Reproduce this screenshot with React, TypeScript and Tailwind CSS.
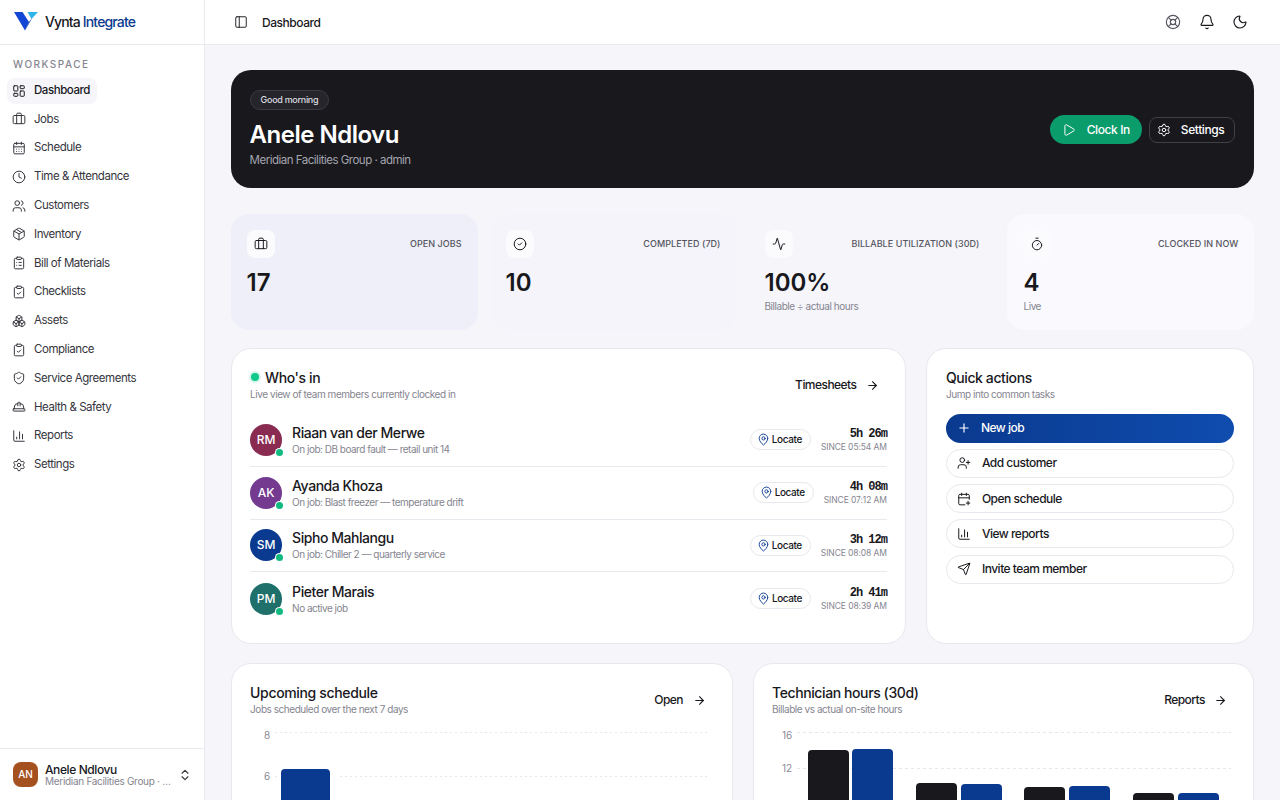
import {
  Activity, ArrowRight, Bell, Boxes, Briefcase, CalendarDays, CalendarPlus, ChartColumn, ChevronsUpDown,
  CircleCheck, ClipboardCheck, ClipboardList, Clock, HardHat, LayoutDashboard, LifeBuoy, MapPin, Moon,
  Package, PanelLeft, Play, Plus, Send, Settings, ShieldCheck, Timer, UserPlus, Users,
} from "lucide-react"

const nav = [
  { label: "Dashboard", icon: LayoutDashboard, active: true },
  { label: "Jobs", icon: Briefcase },
  { label: "Schedule", icon: CalendarDays },
  { label: "Time & Attendance", icon: Clock },
  { label: "Customers", icon: Users },
  { label: "Inventory", icon: Package },
  { label: "Bill of Materials", icon: ClipboardList },
  { label: "Checklists", icon: ClipboardCheck },
  { label: "Assets", icon: Boxes },
  { label: "Compliance", icon: ClipboardCheck },
  { label: "Service Agreements", icon: ShieldCheck },
  { label: "Health & Safety", icon: HardHat },
  { label: "Reports", icon: ChartColumn },
  { label: "Settings", icon: Settings },
]

const stats = [
  { label: "OPEN JOBS", value: "17", sub: "", icon: Briefcase, bg: "bg-[#eeeff8]" },
  { label: "COMPLETED (7D)", value: "10", sub: "", icon: CircleCheck, bg: "bg-[#f4f4fa]" },
  { label: "BILLABLE UTILIZATION (30D)", value: "100%", sub: "Billable ÷ actual hours", icon: Activity, bg: "bg-[#f5f5fa]" },
  { label: "CLOCKED IN NOW", value: "4", sub: "Live", icon: Timer, bg: "bg-[#f9f9fe]" },
]

const people = [
  { initials: "RM", name: "Riaan van der Merwe", job: "On job: DB board fault — retail unit 14", time: "5h 26m", since: "SINCE 05:54 AM", color: "bg-[#8a2c52]" },
  { initials: "AK", name: "Ayanda Khoza", job: "On job: Blast freezer — temperature drift", time: "4h 08m", since: "SINCE 07:12 AM", color: "bg-[#743a8f]" },
  { initials: "SM", name: "Sipho Mahlangu", job: "On job: Chiller 2 — quarterly service", time: "3h 12m", since: "SINCE 08:08 AM", color: "bg-[#0a3a8f]" },
  { initials: "PM", name: "Pieter Marais", job: "No active job", time: "2h 41m", since: "SINCE 08:39 AM", color: "bg-[#1f6f6a]" },
]

const actions = [
  { label: "Add customer", icon: UserPlus },
  { label: "Open schedule", icon: CalendarPlus },
  { label: "View reports", icon: ChartColumn },
  { label: "Invite team member", icon: Send },
]

function CardLink({ label }: { label: string }) {
  return (
    <button className="flex items-center gap-[9.5px] pr-[7px] h-[32px] text-[12px] font-medium tracking-[-0.55px] text-[#18181d] shrink-0">
      {label}
      <ArrowRight className="w-[13px] h-[13px]" />
    </button>
  )
}

function Logo() {
  return (
    <svg width="26" height="20" viewBox="0 0 26 20" className="shrink-0">
      <path d="M1 1 L9.5 1 L16 11 L12 19.5 Z" fill="#1247d6" />
      <path d="M16 11 L19.5 6.5 L12 19.5 Z" fill="#0a3a8f" />
      <path d="M14.5 1 L25 1 L18.5 8 Z" fill="#2fb4ea" />
    </svg>
  )
}

function ScheduleChart() {
  return (
    <svg width="462" height="90" viewBox="0 0 462 90" className="block mt-[15px] overflow-visible">
      <text x="14" y="8" fontSize="10" fill="#8a8a94" fontFamily="Inter">8</text>
      <text x="14" y="49" fontSize="10" fill="#8a8a94" fontFamily="Inter">6</text>
      <line x1="25" x2="459" y1="1.5" y2="1.5" stroke="#e6e6ec" strokeDasharray="2 3" />
      <line x1="25" x2="459" y1="45.5" y2="45.5" stroke="#e6e6ec" strokeDasharray="2 3" />
      <rect x="29" y="36" width="58" height="70" fill="#ffffff" />
      <rect x="31" y="38" width="49" height="70" rx="4" fill="#0a3a8f" />
    </svg>
  )
}

function HoursChart() {
  const bars = [
    [36, 19, 80, 18],
    [144, 52, 189, 53],
    [252, 56, 297, 55],
    [361, 62, 406, 62],
  ]
  return (
    <svg width="462" height="90" viewBox="0 0 462 90" className="block mt-[15px] overflow-visible">
      <text x="10" y="8" fontSize="10" fill="#8a8a94" fontFamily="Inter">16</text>
      <text x="10" y="41" fontSize="10" fill="#8a8a94" fontFamily="Inter">12</text>
      <line x1="25" x2="459" y1="1.5" y2="1.5" stroke="#e6e6ec" strokeDasharray="3 3" />
      <line x1="25" x2="459" y1="37.5" y2="37.5" stroke="#e6e6ec" strokeDasharray="3 3" />
      {bars.map(([x1, y1, x2, y2]) => (
        <g key={x1}>
          <rect x={x1} y={y1} width="41" height="120" rx="4" fill="#18181d" />
          <rect x={x2} y={y2} width="41" height="120" rx="4" fill="#0a3a8f" />
        </g>
      ))}
    </svg>
  )
}

export default function App() {
  return (
    <div className="flex h-screen overflow-hidden bg-[#f5f5fa] text-[#18181d] font-['Inter',sans-serif]">
      <aside className="w-[205px] shrink-0 bg-white border-r border-[#e9e9ef] flex flex-col">
        <div className="h-[45px] shrink-0 border-b border-[#e9e9ef] flex items-center gap-[6px] pl-[13px] pb-[2px]">
          <Logo />
          <span className="text-[14px] font-medium tracking-[-0.85px]">
            Vynta <span className="text-[#0a3a8f]">Integrate</span>
          </span>
        </div>
        <div className="flex-1 px-[7px]">
          <p className="text-[10px] font-medium tracking-[1.5px] text-[#85858f] pl-[6px] pt-[13px] pb-[7.5px] leading-[12px]">WORKSPACE</p>
          <nav className="flex flex-col items-start gap-[2.8px]">
            {nav.map(({ label, icon: Icon, active }) => (
              <a key={label} className={`flex items-center gap-[8px] h-[26px] px-[5px] rounded-[8px] text-[11.5px] tracking-[-0.45px] ${active ? "bg-[#f5f5fa] font-medium text-[#18181d] pr-[7.5px]" : "text-[#35353d]"}`}>
                <Icon className="w-[14px] h-[14px]" strokeWidth={1.7} />
                {label}
              </a>
            ))}
          </nav>
        </div>
        <div className="h-[52px] shrink-0 border-t border-[#e9e9ef] flex items-center pl-[13px] pr-[12px] gap-[7px]">
          <div className="w-[25px] h-[25px] rounded-[8px] bg-[#a5501f] text-white text-[10px] font-medium flex items-center justify-center shrink-0">AN</div>
          <div className="flex-1 min-w-0 leading-none">
            <p className="text-[12px] font-medium leading-[13px] tracking-[-0.4px]">Anele Ndlovu</p>
            <p className="text-[10px] text-[#85858f] leading-[11px] truncate tracking-[-0.3px]">Meridian Facilities Group · admin</p>
          </div>
          <ChevronsUpDown className="w-[14px] h-[14px] text-[#35353d] shrink-0" />
        </div>
      </aside>

      <div className="flex-1 min-w-0 flex flex-col">
        <header className="h-[45px] shrink-0 bg-white border-b border-[#e9e9ef] flex items-center pl-[29px] pr-[32px]">
          <PanelLeft className="w-[14px] h-[14px]" strokeWidth={1.6} />
          <span className="ml-[14px] mt-[1px] text-[12px] font-medium tracking-[-0.45px]">Dashboard</span>
          <div className="ml-auto flex items-center gap-[17.5px]">
            <LifeBuoy className="w-[16px] h-[16px] text-[#55555f]" strokeWidth={1.7} />
            <Bell className="w-[16px] h-[16px]" strokeWidth={1.7} />
            <Moon className="w-[16px] h-[16px]" strokeWidth={1.7} />
          </div>
        </header>

        <main className="flex-1 overflow-hidden px-[25.6px] pt-[25px] flex flex-col">
          <section className="h-[118px] shrink-0 rounded-[20px] bg-[#18181d] flex items-center justify-between pl-[19px] pr-[19px]">
            <div>
              <span className="flex w-fit items-center h-[20px] px-[10px] rounded-full border border-[#3a3a41] bg-[#25252b] text-[9px] font-medium tracking-[-0.3px] text-[#dcdce0]">Good morning</span>
              <h1 className="text-[24px] leading-[32px] font-semibold text-white mt-[9px] tracking-[-0.5px]">Anele Ndlovu</h1>
              <p className="text-[11.5px] leading-[16px] tracking-[-0.5px] text-[#a5a5ad] mt-[1px]">Meridian Facilities Group · admin</p>
            </div>
            <div className="flex items-center gap-[7px] pt-[1px]">
              <button className="flex items-center gap-[11px] h-[29px] px-[12px] rounded-full bg-[#0b9c6b] text-white text-[12px] font-medium tracking-[-0.4px]">
                <Play className="w-[14px] h-[14px]" strokeWidth={1.7} />
                Clock In
              </button>
              <button className="flex items-center gap-[10px] h-[26px] pl-[7px] pr-[10px] rounded-[8px] border border-[#3f3f46] text-white text-[12px] font-medium tracking-[-0.4px]">
                <Settings className="w-[14px] h-[14px]" strokeWidth={1.7} />
                Settings
              </button>
            </div>
          </section>

          <section className="grid grid-cols-4 gap-[12px] mt-[26px] shrink-0">
            {stats.map(({ label, value, sub, icon: Icon, bg }) => (
              <div key={label} className={`h-[116px] rounded-[18px] p-[16px] ${bg}`}>
                <div className="flex items-center justify-between">
                  <div className="w-[28px] h-[28px] rounded-[8px] bg-[#fbfbfe] flex items-center justify-center">
                    <Icon className="w-[14px] h-[14px]" strokeWidth={1.7} />
                  </div>
                  <span className="text-[9px] font-medium tracking-[0.05px] text-[#55555f]">{label}</span>
                </div>
                <p className="text-[24px] leading-[32px] font-semibold mt-[9px]">{value}</p>
                {sub && <p className="text-[10px] leading-[14px] tracking-[-0.45px] text-[#85858f]">{sub}</p>}
              </div>
            ))}
          </section>

          <section className="grid grid-cols-[1fr_328px] gap-[20px] mt-[18px] shrink-0">
            <div className="h-[296px] bg-white rounded-[20px] border border-[#e8e8ee] pt-[19px] pl-[18.5px] pr-[18.5px]">
              <div className="flex items-start justify-between">
                <div>
                  <div className="flex items-center gap-[6px] h-[18px]">
                    <span className="w-[8px] h-[8px] rounded-full bg-[#10c98a] ring-[2px] ring-[#d4f6ea] ml-[1px]" />
                    <h2 className="text-[14px] font-medium tracking-[-0.4px]">Who's in</h2>
                  </div>
                  <p className="text-[10px] leading-[14px] tracking-[-0.45px] text-[#85858f] mt-[1px]">Live view of team members currently clocked in</p>
                </div>
                <div className="mt-[1px] mr-[1px]">
                  <CardLink label="Timesheets" />
                </div>
              </div>
              <div className="mt-[13px]">
                {people.map((p, i) => (
                  <div key={p.initials} className={`flex items-center h-[52.8px] ${i < 3 ? "border-b border-[#e8e8ee]" : ""}`}>
                    <div className={`relative w-[32px] h-[32px] rounded-full text-white text-[12px] font-medium flex items-center justify-center shrink-0 ${p.color}`}>
                      {p.initials}
                      <span className="absolute right-[-0.5px] bottom-0 w-[7px] h-[7px] rounded-full bg-[#10b97f] ring-[1px] ring-white" />
                    </div>
                    <div className="ml-[10px] min-w-0 flex-1">
                      <p className="text-[14px] leading-[18px] font-medium tracking-[-0.45px]">{p.name}</p>
                      <p className="text-[10px] leading-[14px] tracking-[-0.5px] text-[#85858f]">{p.job}</p>
                    </div>
                    <button className="flex items-center gap-[2px] h-[21px] pl-[6px] pr-[8px] rounded-full border border-[#e8e8ee] text-[10px] font-medium tracking-[-0.4px] mr-[10px]">
                      <MapPin className="w-[13px] h-[13px] text-[#0a3a8f]" strokeWidth={1.7} />
                      Locate
                    </button>
                    <div className="text-right">
                      <p className="font-['Liberation_Mono',monospace] text-[12px] leading-[14px] font-bold tracking-[-1px] mt-[1px]">{p.time}</p>
                      <p className="text-[8.5px] leading-[12px] tracking-[-0.1px] text-[#85858f]">{p.since}</p>
                    </div>
                  </div>
                ))}
              </div>
            </div>

            <div className="h-[296px] bg-white rounded-[20px] border border-[#e8e8ee] pt-[20px] pl-[18.5px] pr-[19px]">
              <h2 className="text-[14px] leading-[18px] font-medium tracking-[-0.4px]">Quick actions</h2>
              <p className="text-[10px] leading-[14px] tracking-[-0.45px] text-[#85858f]">Jump into common tasks</p>
              <div className="flex flex-col gap-[6.3px] mt-[12.5px]">
                <button className="flex items-center gap-[10px] h-[29px] pl-[11px] rounded-full bg-gradient-to-r from-[#0a3a8f] to-[#0f4cae] text-white text-[12px] font-medium tracking-[-0.5px]">
                  <Plus className="w-[14px] h-[14px]" />
                  New job
                </button>
                {actions.map(({ label, icon: Icon }) => (
                  <button key={label} className="flex items-center gap-[11px] h-[29px] pl-[10px] rounded-full border border-[#e8e8ee] text-[12px] font-medium tracking-[-0.5px]">
                    <Icon className="w-[14px] h-[14px]" strokeWidth={1.7} />
                    {label}
                  </button>
                ))}
              </div>
            </div>
          </section>

          <section className="grid grid-cols-2 gap-[20px] mt-[19px]">
            <div className="h-[300px] bg-white rounded-[20px] border border-[#e8e8ee] pt-[20px] pl-[18.5px] pr-[19px]">
              <div className="flex items-center justify-between">
                <div>
                  <h2 className="text-[14px] leading-[18px] font-medium tracking-[-0.35px]">Upcoming schedule</h2>
                  <p className="text-[10px] leading-[14px] tracking-[-0.45px] text-[#85858f]">Jobs scheduled over the next 7 days</p>
                </div>
                <CardLink label="Open" />
              </div>
              <ScheduleChart />
            </div>
            <div className="h-[300px] bg-white rounded-[20px] border border-[#e8e8ee] pt-[20px] pl-[18.5px] pr-[19px]">
              <div className="flex items-center justify-between">
                <div>
                  <h2 className="text-[14px] leading-[18px] font-medium tracking-[-0.4px]">Technician hours (30d)</h2>
                  <p className="text-[10px] leading-[14px] tracking-[-0.45px] text-[#85858f]">Billable vs actual on-site hours</p>
                </div>
                <CardLink label="Reports" />
              </div>
              <HoursChart />
            </div>
          </section>
        </main>
      </div>
    </div>
  )
}
